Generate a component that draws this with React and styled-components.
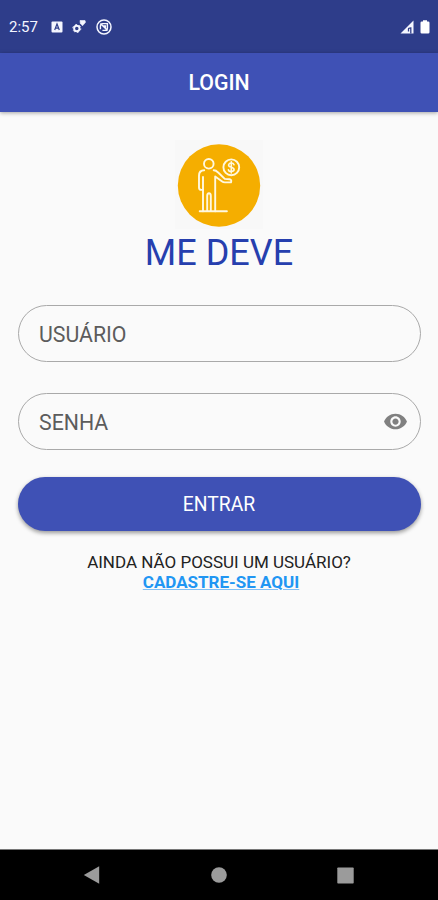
import React from "react";
import styled, { createGlobalStyle } from "styled-components";

const colors = {
  primary: "#3f51b5",
  primaryDark: "#2e3d8a",
  title: "#263fae",
  background: "#fafafa",
  border: "#a9a9a9",
  hint: "#5c5c5c",
  link: "#2196f3",
  logo: "#f5ae00",
  nav: "#9b9b9b",
};

const GlobalStyle = createGlobalStyle`
  * {
    box-sizing: border-box;
  }
  body {
    margin: 0;
    font-family: Roboto, "Liberation Sans", sans-serif;
    background: ${colors.background};
  }
`;

const Screen = styled.div`
  display: flex;
  flex-direction: column;
  width: 438px;
  height: 900px;
  background: ${colors.background};
  overflow: hidden;
`;

const StatusBar = styled.div`
  display: flex;
  align-items: center;
  justify-content: space-between;
  height: 53px;
  padding: 0 8px 0 9px;
  background: ${colors.primaryDark};
  color: #f4f6ff;
`;

const StatusGroup = styled.div`
  display: flex;
  align-items: center;
  gap: ${({ $gap }) => $gap}px;
`;

const Clock = styled.span`
  width: 32px;
  padding-top: 1px;
  font-size: 15px;
  line-height: 20px;
  white-space: nowrap;
`;

const AppBar = styled.header`
  display: flex;
  align-items: center;
  justify-content: center;
  height: 59px;
  background: ${colors.primary};
  box-shadow: 0 1px 4px rgba(0, 0, 0, 0.35);
`;

const AppBarTitle = styled.h1`
  margin: 1px 0 0;
  color: #fff;
  font-size: 21.3px;
  font-weight: 500;
  line-height: 28px;
`;

const Content = styled.main`
  display: flex;
  flex: 1;
  flex-direction: column;
  align-items: center;
  padding: 28px 17px 0 18px;
`;

const LogoTile = styled.div`
  display: flex;
  justify-content: center;
  width: 88px;
  height: 89px;
  margin-right: 1px;
  padding-top: 4px;
  background: #f8f8f8;
`;

const Logo = styled.svg`
  display: block;
  width: 84px;
  height: 84px;
`;

const Title = styled.h2`
  margin: 3px 1px 30px 0;
  color: ${colors.title};
  font-size: 36px;
  font-weight: 400;
  line-height: 43px;
`;

const Field = styled.label`
  display: flex;
  align-items: center;
  width: 100%;
  height: 57px;
  margin-bottom: ${({ $gap }) => $gap}px;
  padding: 0 12px 0 20px;
  border: 1px solid ${colors.border};
  border-radius: 29px;
`;

const Input = styled.input`
  flex: 1;
  min-width: 0;
  height: 30px;
  padding: 2px 0 0;
  border: 0;
  outline: 0;
  background: transparent;
  font-family: inherit;
  font-size: 21.3px;
  &::placeholder {
    color: ${colors.hint};
    opacity: 1;
  }
`;

const SubmitButton = styled.button`
  width: 100%;
  height: 54px;
  padding: 0 1px 0 0;
  border: 0;
  border-radius: 27px;
  background: ${colors.primary};
  box-shadow: 0 2px 4px rgba(0, 0, 0, 0.4);
  color: #fff;
  font-family: inherit;
  font-size: 19.3px;
`;

const SignUp = styled.p`
  display: flex;
  flex-direction: column;
  align-items: center;
  margin: 21px 1px 0 0;
  color: #222;
  font-size: 17px;
  line-height: 20px;
`;

const SignUpLink = styled.a`
  margin-left: 4px;
  color: ${colors.link};
  font-size: 17px;
  font-weight: 700;
  text-decoration: underline;
  text-decoration-color: #82c0f5;
`;

const NavBar = styled.nav`
  display: flex;
  align-items: center;
  justify-content: space-between;
  height: 51px;
  padding: 0 84px 0 83px;
  border-top: 1px solid #777;
  background: #000;
`;

function KeyboardIcon() {
  return (
    <svg width="12" height="12" viewBox="0 0 12 12">
      <rect x="0.5" y="0.5" width="11" height="11" rx="1" fill="#f4f6ff" />
      <path d="M3.7 9 6 3 8.3 9M4.5 7.2h3" fill="none" stroke={colors.primaryDark} strokeWidth="1.2" />
    </svg>
  );
}

function GearsIcon() {
  return (
    <svg width="14" height="15" viewBox="0 0 14 15" fill="none" stroke="#f4f6ff">
      <circle cx="4.8" cy="9.5" r="2.7" strokeWidth="1.9" />
      <circle cx="4.8" cy="9.5" r="4" strokeWidth="1" strokeDasharray="1.8 2.39" />
      <path d="M8 1.5h5l.5 1.8-3 3.5-2.2-2.5z" fill="#f4f6ff" strokeWidth=".6" />
    </svg>
  );
}

function SyncIcon() {
  return (
    <svg width="16" height="16" viewBox="0 0 16 16" fill="none" stroke="#f4f6ff">
      <circle cx="8" cy="8" r="7" strokeWidth="1.5" />
      <path d="M4.4 10.2V7q0-2.4 2.4-2.4h4.6V9q0 2.4-2.4 2.4H6.4M4.4 4.4l7.2 7.2M7.6 7h1.8v1.8" strokeWidth="1.4" />
    </svg>
  );
}

function SignalIcon() {
  return (
    <svg width="14" height="14" viewBox="0 0 14 14">
      <path d="M.5 13.5 13.5.5v13z" fill="#f4f6ff" />
      <path d="M8.5 11.5V9q0-1.2 2.3-1.2V13.5" fill="none" stroke={colors.primaryDark} strokeWidth="1.3" />
    </svg>
  );
}

function BatteryIcon() {
  return (
    <svg width="10" height="14" viewBox="0 0 10 14">
      <path d="M3 .3h4v1.2h1.2q1.3 0 1.3 1.3v9.5q0 1.3-1.3 1.3H1.8q-1.3 0-1.3-1.3V2.8q0-1.3 1.3-1.3H3z" fill="#fff" />
    </svg>
  );
}

function BrandLogo() {
  return (
    <Logo viewBox="0 0 84 84" fill="none" stroke="#fff8df" strokeWidth="1.9" strokeLinejoin="round" strokeLinecap="round">
      <circle cx="42" cy="41.5" r="41.2" fill={colors.logo} stroke="none" />
      {/* person */}
      <circle cx="31.8" cy="19.8" r="4.8" />
      <path d="M27.2 26.2q-5.2 0-5.2 5.5V43.5q0 2.4 2.3 2.4h1.7V33" />
      <path d="M26 46v21.3M38.2 67.3V32.5l6.6 4.7q1.4 1.2 3.2 1.2h6q1-2.9-1.6-3.1l-4.6-.4-6.9-6.6q-1.8-2.1-4.2-2.1" />
      <path d="M30.2 67.3V52q0-2.8 1.8-2.8t1.8 2.8v15.3M22.7 67.3h27.2" />
      {/* coin */}
      <circle cx="54.3" cy="23.3" r="7.9" />
      <path d="M57 20.7q-.5-1.7-2.7-1.7t-2.7 1.9q0 1.7 2.7 2.3t2.8 2.4q0 1.9-2.8 1.9t-2.9-1.8M54.3 17.7v11.2" strokeWidth="1.6" />
    </Logo>
  );
}

function EyeIcon() {
  return (
    <svg width="25" height="25" viewBox="0 0 24 24" fill="#808080">
      <path d="M12 4.5C7 4.5 2.73 7.61 1 12c1.73 4.39 6 7.5 11 7.5s9.27-3.11 11-7.5c-1.73-4.39-6-7.5-11-7.5zM12 17c-2.76 0-5-2.24-5-5s2.24-5 5-5 5 2.24 5 5-2.24 5-5 5zm0-8c-1.66 0-3 1.34-3 3s1.34 3 3 3 3-1.34 3-3-1.34-3-3-3z" />
    </svg>
  );
}

function App() {
  return (
    <>
      <GlobalStyle />
      <Screen>
        <StatusBar>
          <StatusGroup $gap={9.6}>
            <Clock>2:57</Clock>
            <KeyboardIcon />
            <GearsIcon />
            <SyncIcon />
          </StatusGroup>
          <StatusGroup $gap={6}>
            <SignalIcon />
            <BatteryIcon />
          </StatusGroup>
        </StatusBar>
        <AppBar>
          <AppBarTitle>LOGIN</AppBarTitle>
        </AppBar>
        <Content>
          <LogoTile>
            <BrandLogo />
          </LogoTile>
          <Title>ME DEVE</Title>
          <Field $gap={31}>
            <Input type="text" placeholder="USUÁRIO" />
          </Field>
          <Field $gap={27}>
            <Input type="password" placeholder="SENHA" />
            <EyeIcon />
          </Field>
          <SubmitButton type="button">ENTRAR</SubmitButton>
          <SignUp>
            AINDA NÃO POSSUI UM USUÁRIO?
            <SignUpLink>CADASTRE-SE AQUI</SignUpLink>
          </SignUp>
        </Content>
        <NavBar>
          <svg width="17" height="18" viewBox="0 0 17 18">
            <path d="M.8 9 16.2.3v17.4z" fill={colors.nav} />
          </svg>
          <svg width="16" height="16" viewBox="0 0 16 16">
            <circle cx="8" cy="8" r="7.8" fill={colors.nav} />
          </svg>
          <svg width="17" height="17" viewBox="0 0 17 17">
            <rect x=".3" y=".5" width="16.4" height="16" rx=".8" fill={colors.nav} />
          </svg>
        </NavBar>
      </Screen>
    </>
  );
}

export default App;
